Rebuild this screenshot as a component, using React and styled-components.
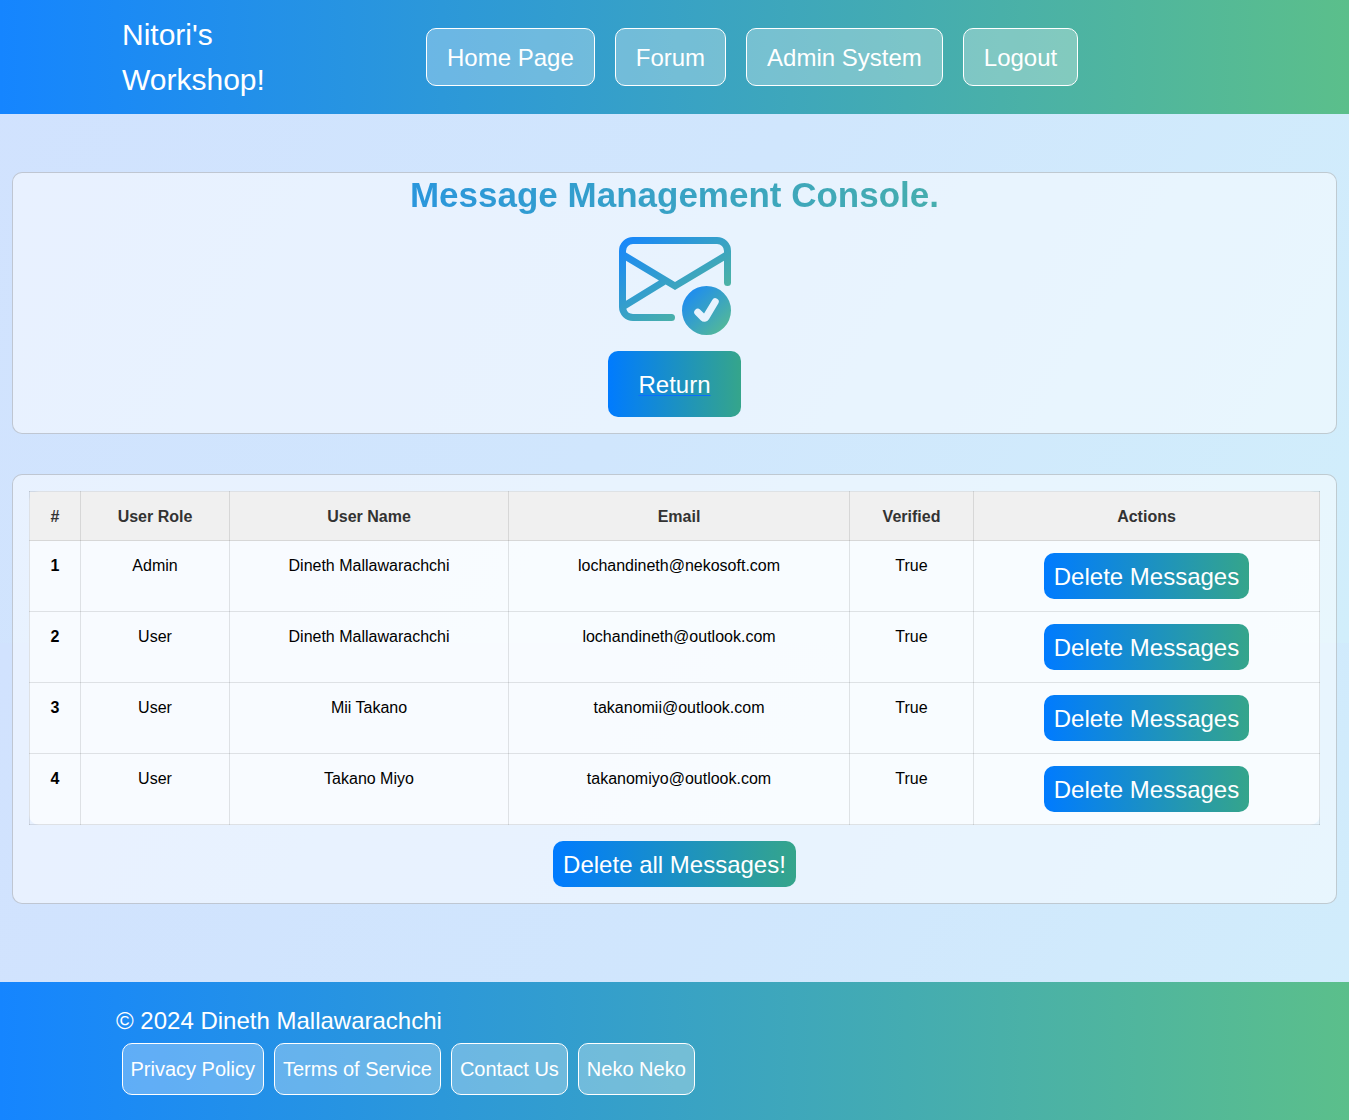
import React from "react";
import styled, { createGlobalStyle } from "styled-components";

const GlobalStyle = createGlobalStyle`
  *, *::before, *::after { box-sizing: border-box; }
  body {
    margin: 0;
    font-family: "Liberation Sans", Arial, sans-serif;
    font-size: 16px;
    line-height: 1.5;
    color: #000;
    background: linear-gradient(120deg, #d1e2fe, #d0e6fd 50%, #d1eefb) 0 0 / 100% 643px repeat-y;
  }
`;

const barGradient = "linear-gradient(to right, #1585ff, #5bbf8b)";
const buttonGradient = "linear-gradient(to right, #007bff, #35a58b)";

const Page = styled.div`
  display: flex;
  flex-direction: column;
  min-height: 1120px;
`;

const Header = styled.header`
  display: flex;
  align-items: center;
  height: 114px;
  padding: 12px 0 12px 122px;
  background: ${barGradient};
`;

const Brand = styled.a`
  width: 304px;
  padding-right: 120px;
  color: #fff;
  font-size: 30px;
  line-height: 45px;
`;

const LinkRow = styled.nav`
  display: flex;
  gap: ${(p) => p.$gap}px;
`;

const GlassLink = styled.a`
  padding: ${(p) => (p.$small ? "10px 8.5px 10px 7.5px" : "11px 20px 9px")};
  border: 1px solid #fff;
  border-radius: 10px;
  background: rgba(255, 255, 255, 0.3);
  color: #fff;
  font-size: ${(p) => (p.$small ? 20 : 24)}px;
  white-space: nowrap;
`;

const Main = styled.main`
  display: flex;
  flex-direction: column;
  gap: 40px;
  padding: 58px 12px 78px;
`;

const Card = styled.section`
  display: flex;
  flex-direction: column;
  align-items: center;
  padding: ${(p) => p.$padding};
  border: 1px solid rgba(0, 0, 0, 0.175);
  border-radius: 10px;
  background: rgba(255, 255, 255, 0.5);
`;

const Title = styled.h1`
  width: 100%;
  margin: 0 0 7px;
  padding-top: 1px;
  font-size: 35px;
  font-weight: 700;
  line-height: 42px;
  text-align: center;
  color: transparent;
  background: ${barGradient};
  background-clip: text;
  -webkit-background-clip: text;
`;

const MailIcon = styled.svg`
  display: block;
  width: 112px;
  height: 112px;
  margin-bottom: 16px;
`;

const ReturnLink = styled.a`
  padding: 16px 30px 14px;
  border-radius: 10px;
  background: ${buttonGradient};
  color: #fff;
  font-size: 24px;
  text-decoration: underline;
  text-decoration-color: #0d6efd;
  text-decoration-thickness: 1px;
  text-underline-offset: 2px;
`;

const Button = styled.button`
  display: block;
  margin: 0 auto;
  padding: 6px 10px 4px;
  border: 0;
  border-radius: 10px;
  background: ${buttonGradient};
  color: #fff;
  font: inherit;
  font-size: 24px;
  line-height: 36px;
`;

const Table = styled.table`
  width: 1291px;
  margin-bottom: 16px;
  table-layout: fixed;
  border-collapse: collapse;
  border-radius: 10px;
  background: rgba(255, 255, 255, 0.7);
  text-align: center;
`;

const Column = styled.col`
  width: ${(p) => p.$width}px;
`;

const Cell = styled.td`
  padding: ${(p) => (p.$action ? "12px 0" : "13px 0 11px")};
  border: 1px solid rgba(0, 0, 0, 0.1);
  vertical-align: top;
`;

const RowNumber = styled(Cell)`
  font-weight: 700;
`;

const HeadCell = styled(Cell)`
  background: #f0f0f0;
  color: #333;
  font-weight: 700;
`;

const Footer = styled.footer`
  flex: 1;
  display: flex;
  flex-direction: column;
  gap: 4px;
  padding: 21px 0 25px 116px;
  background: ${barGradient};
`;

const Copyright = styled.div`
  color: #fff;
  font-size: 24px;
`;

const FooterLinks = styled.div`
  padding-left: 6px;
`;

const navItems = ["Home Page", "Forum", "Admin System", "Logout"];
const footerItems = ["Privacy Policy", "Terms of Service", "Contact Us", "Neko Neko"];
const columns = [
  ["#", 51],
  ["User Role", 149],
  ["User Name", 279],
  ["Email", 341],
  ["Verified", 124],
  ["Actions", 346],
];
const users = [
  ["Admin", "Dineth Mallawarachchi", "lochandineth@nekosoft.com", "True"],
  ["User", "Dineth Mallawarachchi", "lochandineth@outlook.com", "True"],
  ["User", "Mii Takano", "takanomii@outlook.com", "True"],
  ["User", "Takano Miyo", "takanomiyo@outlook.com", "True"],
];

function EnvelopeCheck() {
  return (
    <MailIcon viewBox="0 0 16 16" fill="url(#mailGradient)" aria-hidden="true">
      <defs>
        <linearGradient id="mailGradient" x1="0" y1="0" x2="1" y2="1">
          <stop offset="0" stopColor="#1585ff" />
          <stop offset="1" stopColor="#5bbf8b" />
        </linearGradient>
      </defs>
      <path d="M2 2a2 2 0 0 0-2 2v8.01A2 2 0 0 0 2 14h5.5a.5.5 0 0 0 0-1H2a1 1 0 0 1-.966-.741l5.64-3.471L8 9.583l7-4.2V8.5a.5.5 0 0 0 1 0V4a2 2 0 0 0-2-2zm3.708 6.208L1 11.105V5.383zM1 4.217V4a1 1 0 0 1 1-1h12a1 1 0 0 1 1 1v.217l-7 4.2z" />
      <path d="M16 12.5a3.5 3.5 0 1 1-7 0 3.5 3.5 0 0 1 7 0m-1.993-1.679a.5.5 0 0 0-.686.172l-1.17 1.95-.547-.547a.5.5 0 0 0-.708.708l.774.773a.75.75 0 0 0 1.174-.144l1.335-2.226a.5.5 0 0 0-.172-.686" />
    </MailIcon>
  );
}

export default function App() {
  return (
    <>
      <GlobalStyle />
      <Page>
        <Header>
          <Brand>Nitori's Workshop!</Brand>
          <LinkRow $gap={20}>
            {navItems.map((label) => (
              <GlassLink key={label}>{label}</GlassLink>
            ))}
          </LinkRow>
        </Header>
        <Main>
          <Card $padding="0 0 16px">
            <Title>Message Management Console.</Title>
            <EnvelopeCheck />
            <ReturnLink>Return</ReturnLink>
          </Card>
          <Card $padding="16px">
            <Table>
              <colgroup>
                {columns.map(([name, width]) => (
                  <Column key={name} $width={width} />
                ))}
              </colgroup>
              <thead>
                <tr>
                  {columns.map(([name]) => (
                    <HeadCell as="th" key={name}>{name}</HeadCell>
                  ))}
                </tr>
              </thead>
              <tbody>
                {users.map((user, index) => (
                  <tr key={index}>
                    <RowNumber as="th">{index + 1}</RowNumber>
                    {user.map((value, i) => (
                      <Cell key={i}>{value}</Cell>
                    ))}
                    <Cell $action>
                      <Button>Delete Messages</Button>
                    </Cell>
                  </tr>
                ))}
              </tbody>
            </Table>
            <Button>Delete all Messages!</Button>
          </Card>
        </Main>
        <Footer>
          <Copyright>© 2024 Dineth Mallawarachchi</Copyright>
          <FooterLinks>
            <LinkRow as="div" $gap={10}>
              {footerItems.map((label) => (
                <GlassLink $small key={label}>{label}</GlassLink>
              ))}
            </LinkRow>
          </FooterLinks>
        </Footer>
      </Page>
    </>
  );
}
